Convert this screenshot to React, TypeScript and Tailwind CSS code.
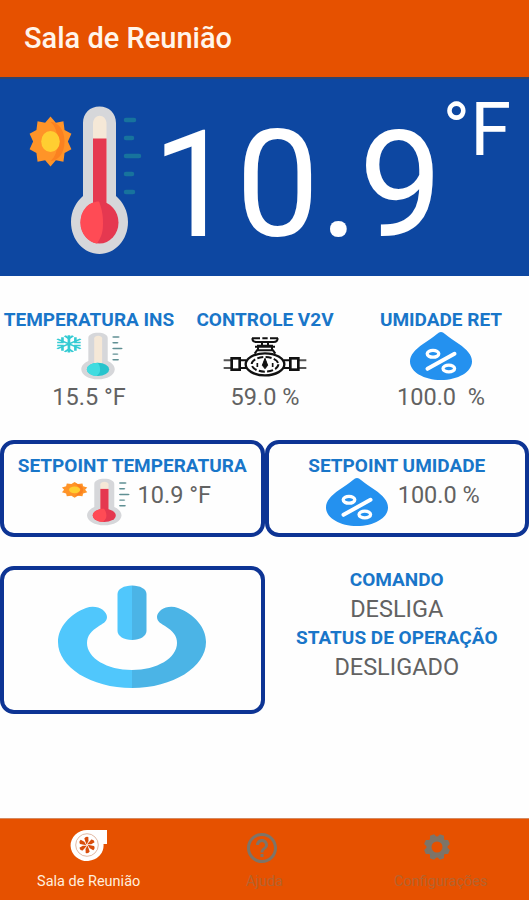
import React from "react";
import { MdHelpOutline } from "react-icons/md";

const points = (count: number, cx: number, cy: number, rx: number, ry: number, inner: number) =>
    Array.from({ length: count * 2 }, (_, i) => {
        const angle = (i * Math.PI) / count - Math.PI / 2;
        const r = i % 2 ? inner : 1;
        return `${(cx + Math.cos(angle) * rx * r).toFixed(2)},${(cy + Math.sin(angle) * ry * r).toFixed(2)}`;
    }).join(" ");

type ThermometerProps = { className: string; cold?: boolean; ticks?: string };

function Thermometer({ className, cold = false, ticks = "#5f8f93" }: ThermometerProps) {
    return (
        <svg viewBox="0 0 114 152" preserveAspectRatio="none" className={className}>
            {cold ? (
                <g stroke="#35cbd3" strokeWidth="4.500" fill="none">
                    <path d="M22 10V65M2 22L42 53M42 22L2 53" />
                    <path d="M15 12l7 9 7-9M15 63l7-9 7 9M2 33h9V17M42 33h-9V17M2 43h9V59M42 43h-9V59" />
                </g>
            ) : (
                <g>
                    <polygon points={points(10, 22.5, 37.5, 22, 25, 0.79)} fill="#ff9428" />
                    <path d="M22.500 18c8 0 14 8 14 19.500s-6 19.500-14 19.500c5-4 7-11 7-19.500s-2-15.500-7-19.500z" fill="#fb8120" />
                    <ellipse cx="22.500" cy="37.500" rx="9.300" ry="10.500" fill="#ffce31" />
                </g>
            )}
            <path d="M55 19C55 9 62 2.500 71.500 2.500S88 9 88 19V92C95 98 100 107 100 118C100 136 87 150 71.500 150S43 136 43 118C43 107 48 98 55 92Z" fill="#d6d7da" />
            <path d="M65 20C65 9 78.500 9 78.500 20V103H65Z" fill="#f5e8d7" />
            {!cold && <rect x="65" y="34.500" width="13.500" height="70" fill="#e53850" />}
            <ellipse cx="71.500" cy="118.500" rx="19" ry="21" fill={cold ? "#27c4cd" : "#e53850"} />
            <path d="M71 97.500C60 97.500 52.500 107 52.500 118.500S60 138 69 139.500C74 132 75 127 75 119C75 109 73 103 71 97.500Z" fill={cold ? "#40dce0" : "#ff4b55"} />
            <g stroke={ticks} strokeWidth="4.500" strokeLinecap="round">
                <path d="M98 16H106M98 34H104M98 52H111M98 70H104M98 88H105" />
            </g>
        </svg>
    );
}

function Drop({ className }: { className: string }) {
    return (
        <svg viewBox="0 0 62 48" className={className}>
            <path d="M31 0C32.500 0 33.500 .8 35 2C39 5.500 44 8.500 49 12C57 17.500 62 23 62 29.500C62 40 48 48 31 48S0 40 0 29.500C0 23 5 17.500 13 12C18 8.500 23 5.500 27 2C28.500 .8 29.500 0 31 0Z" fill="#2491ef" />
            <g fill="none" stroke="#fff">
                <ellipse cx="23" cy="21.800" rx="5.800" ry="3.400" strokeWidth="3.300" />
                <ellipse cx="38.800" cy="36.500" rx="5.800" ry="3.400" strokeWidth="3.300" />
                <path d="M17.500 36.800L44.500 21.800" strokeWidth="4" strokeLinecap="round" />
            </g>
        </svg>
    );
}

function Valve() {
    return (
        <svg viewBox="24 15 252 123" className="h-[41px] w-[84px]" fill="none" stroke="#111" strokeWidth="6">
            <path d="M26 88h23M26 111h23M251 88h23M251 111h23" stroke="#555" />
            <rect x="50" y="82" width="24" height="34" strokeWidth="8" />
            <rect x="226" y="82" width="24" height="34" strokeWidth="8" />
            <path d="M74 88h20M74 111h20M206 88h20M206 111h20" />
            <ellipse cx="150" cy="100" rx="58" ry="33" strokeWidth="7" />
            <ellipse cx="150" cy="100" rx="40" ry="22" strokeDasharray="18 7" />
            <path d="M150 82L142 103L150 113L158 103Z" fill="#111" strokeWidth="3" />
            <path d="M127 96v12M173 96v12" strokeWidth="5" />
            <path d="M119 68L126 58H174L181 68M129 56V44H171V56M120 47H180" />
            <path d="M112 22Q112 33 124 33H176Q188 33 188 22M111 22H135M142 22H158M165 22H189" />
            <path d="M141 34v10M159 34v10" />
        </svg>
    );
}

function PowerIcon() {
    return (
        <svg viewBox="0 0 148 103" className="h-[103px] w-[148px]">
            <path d="M28 23C38 19 49 25 49 32C49 37 44 39 41 41C33 46 29 51 29 58C29 73 49 85 74 85V103C33 103 0 82 0 57C0 42 12 29 28 23Z" fill="#50c7fc" />
            <path d="M120 23C110 19 99 25 99 32C99 37 104 39 107 41C115 46 119 51 119 58C119 73 99 85 74 85V103C115 103 148 82 148 57C148 42 136 29 120 23Z" fill="#4bb4e6" />
            <path d="M74 .500C66 .500 59.500 4 59.500 9V46C59.500 51 66 55 74 55Z" fill="#50c7fc" />
            <path d="M74 .500C82 .500 88.500 4 88.500 9V46C88.500 51 82 55 74 55Z" fill="#4bb4e6" />
        </svg>
    );
}

function BlowerIcon() {
    return (
        <svg viewBox="0 0 38 32" className="h-8 w-[38px]">
            <path d="M17 1H37V15H33.500A16.500 15.500 0 1 1 17 1Z" fill="#fff" />
            <circle cx="17" cy="16" r="11.300" fill="none" stroke="#d9a78d" strokeWidth=".8" />
            <g fill="#d94d0c">
                {[0, 60, 120, 180, 240, 300].map((angle) => (
                    <path key={angle} transform={`rotate(${angle} 17 16)`} d="M16.500 15.500L14.300 9.500Q15.500 7 18.300 8L18.500 12Z" />
                ))}
            </g>
        </svg>
    );
}

function GearIcon() {
    return (
        <svg viewBox="0 0 28 28" className="mr-2 h-7 w-7">
            <g fill="#7d7468">
                {[22.5, 67.5, 112.5, 157.5, 202.5, 247.5, 292.5, 337.5].map((angle) => (
                    <path key={angle} transform={`rotate(${angle} 14 14)`} d="M9.800 6L11.800 1H16.200L18.200 6Z" />
                ))}
            </g>
            <circle cx="14" cy="14" r="8" fill="none" stroke="#7d7468" strokeWidth="5" />
        </svg>
    );
}

function Label({ children }: { children: React.ReactNode }) {
    return <span className="text-[19px] leading-[24px] font-bold whitespace-pre text-[#1976c9]">{children}</span>;
}

function Value({ children }: { children: React.ReactNode }) {
    return <span className="text-[23.500px] leading-[34px] whitespace-pre text-[#626262]">{children}</span>;
}

export default function App() {
    return (
        <div className="flex h-[900px] w-[529px] flex-col overflow-hidden bg-[#fefefe] font-['Roboto',sans-serif]">
            <header className="flex h-[77px] shrink-0 items-center bg-[#e65100] pl-6">
                <h1 className="text-[29px] leading-none font-medium text-[#fff5eb]">Sala de Reunião</h1>
            </header>

            <section className="flex h-[199px] shrink-0 border-t-2 border-[#31436b] bg-[#0d47a1] pl-7 text-white">
                <Thermometer className="mt-[25px] h-[152px] w-[114px]" ticks="#17739d" />
                <span className="mt-[18px] ml-[10px] text-[149px] leading-[176px]">10.9</span>
                <span className="mt-[7px] text-[74px] leading-[88px]">°F</span>
            </section>

            <section className="grid h-[164px] shrink-0 grid-cols-3 pt-8 pl-px">
                <div className="flex flex-col items-center">
                    <Label>TEMPERATURA INS</Label>
                    <Thermometer className="h-12 w-[67px]" cold />
                    <Value>15.5 °F</Value>
                </div>
                <div className="flex flex-col items-center">
                    <Label>CONTROLE V2V</Label>
                    <div className="flex h-12 items-center">
                        <Valve />
                    </div>
                    <Value>59.0 %</Value>
                </div>
                <div className="flex flex-col items-center">
                    <Label>UMIDADE RET</Label>
                    <Drop className="h-12 w-[62px]" />
                    <Value>{"100.0  %"}</Value>
                </div>
            </section>

            <section className="grid h-[97px] shrink-0 grid-cols-2">
                <div className="flex flex-col items-center rounded-[14px] border-4 border-[#0d3494] pt-[10px]">
                    <Label>SETPOINT TEMPERATURA</Label>
                    <div className="flex pl-[7px]">
                        <Thermometer className="h-12 w-[69px]" />
                        <div className="ml-2">
                            <Value>10.9 °F</Value>
                        </div>
                    </div>
                </div>
                <div className="flex flex-col items-center rounded-[14px] border-4 border-[#0d3494] pt-[10px]">
                    <Label>SETPOINT UMIDADE</Label>
                    <div className="flex pl-3">
                        <Drop className="h-12 w-[62px]" />
                        <div className="ml-[10px]">
                            <Value>100.0 %</Value>
                        </div>
                    </div>
                </div>
            </section>

            <section className="mt-[29px] grid h-[148px] shrink-0 grid-cols-2">
                <button className="flex justify-center rounded-[14px] border-4 border-[#0d3494] pt-[15px]">
                    <PowerIcon />
                </button>
                <div className="flex flex-col items-center pt-[2px]">
                    <Label>COMANDO</Label>
                    <Value>DESLIGA</Value>
                    <Label>STATUS DE OPERAÇÃO</Label>
                    <Value>DESLIGADO</Value>
                </div>
            </section>

            <nav className="mt-auto grid h-[82px] grid-cols-3 border-t border-[#d58a60] bg-[#e65100] text-[14.500px] leading-4 text-[#7d7468]">
                <div className="flex flex-col items-center pt-[10px] pl-px text-[#ffeedd]">
                    <BlowerIcon />
                    <span className="mt-[13px]">Sala de Reunião</span>
                </div>
                <div className="flex flex-col items-center pt-[11px]">
                    <MdHelpOutline className="mr-1 h-9 w-9" />
                    <span className="mt-2 text-[#b5632e]">Ajuda</span>
                </div>
                <div className="flex flex-col items-center pt-[14px]">
                    <GearIcon />
                    <span className="mt-[13px] text-[#b5632e]">Configurações</span>
                </div>
            </nav>
        </div>
    );
}
